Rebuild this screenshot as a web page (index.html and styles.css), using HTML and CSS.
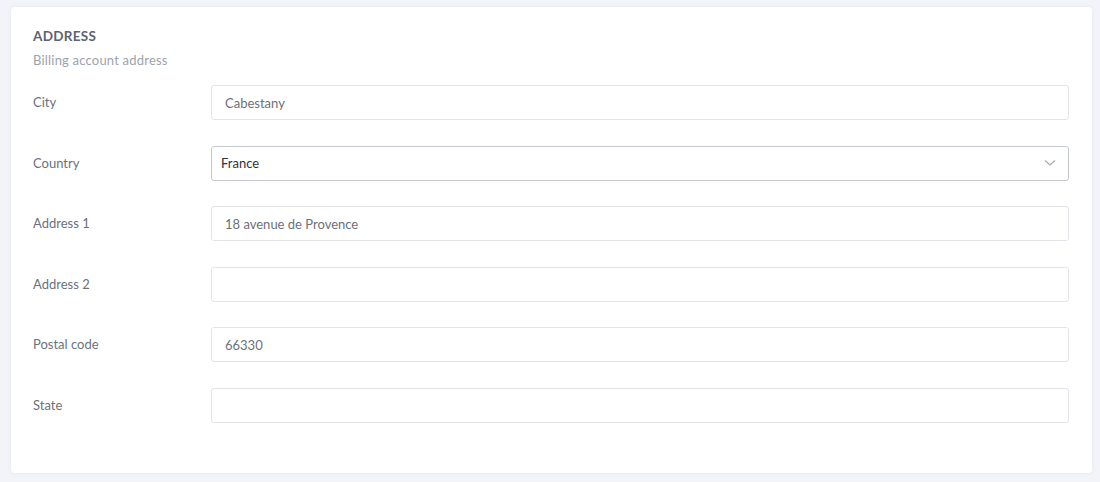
FILE: index.html
```html
<!DOCTYPE html>
<html>
<head>
<meta charset="utf-8">
<link rel="stylesheet" href="styles.css">
</head>
<body>
<div class="card">
  <div class="title">ADDRESS</div>
  <div class="subtitle">Billing account address</div>
  <div class="rows">
    <div class="row"><div class="label">City</div><div class="input">Cabestany</div></div>
    <div class="row"><div class="label">Country</div><div class="select"><span>France</span>
      <svg class="chev" width="12" height="8" viewBox="0 0 12 8"><path d="M1 1.5 L6 6 L11 1.5" fill="none" stroke="#a8adb5" stroke-width="1.3"/></svg></div></div>
    <div class="row"><div class="label">Address 1</div><div class="input">18 avenue de Provence</div></div>
    <div class="row"><div class="label">Address 2</div><div class="input"></div></div>
    <div class="row"><div class="label">Postal code</div><div class="input">66330</div></div>
    <div class="row"><div class="label">State</div><div class="input"></div></div>
  </div>
</div>
</body>
</html>
```
FILE: styles.css
```css
html, body { margin: 0; padding: 0; }
body {
  background: #f3f4f9;
  font-family: Lato, "Open Sans", sans-serif;
  padding: 7px 8px 9px 11px;
  height: 482px;
  box-sizing: border-box;
}
.card {
  background: #fff;
  border-radius: 4px;
  box-shadow: 0 0 4px rgba(30, 40, 80, 0.06);
  padding: 22px 23px 51px 22px;
  box-sizing: border-box;
  height: 466px;
}
.title {
  font-size: 13.5px;
  font-weight: 700;
  line-height: 14px;
  color: #5d6370;
  letter-spacing: 0.3px;
}
.subtitle {
  margin-top: 9px;
  font-size: 13px;
  line-height: 16px;
  color: #9ca3ad;
  letter-spacing: 0.2px;
}
.rows {
  margin-top: 17px;
  display: flex;
  flex-direction: column;
  gap: 25.6px;
}
.row {
  display: flex;
  align-items: center;
}
.label {
  width: 178px;
  flex: none;
  font-size: 13px;
  color: #6b717c;
  padding-bottom: 1px;
}
.input, .select {
  flex: 1;
  height: 35px;
  box-sizing: border-box;
  border: 1px solid #e1e4e8;
  border-radius: 3px;
  display: flex;
  align-items: center;
  padding-left: 13px;
  font-size: 13px;
  color: #6b717c;
}
.select {
  border-color: #c6cad0;
  padding-left: 9px;
  padding-right: 12px;
  color: #2f3238;
  justify-content: space-between;
}
.chev { display: block; }
```
